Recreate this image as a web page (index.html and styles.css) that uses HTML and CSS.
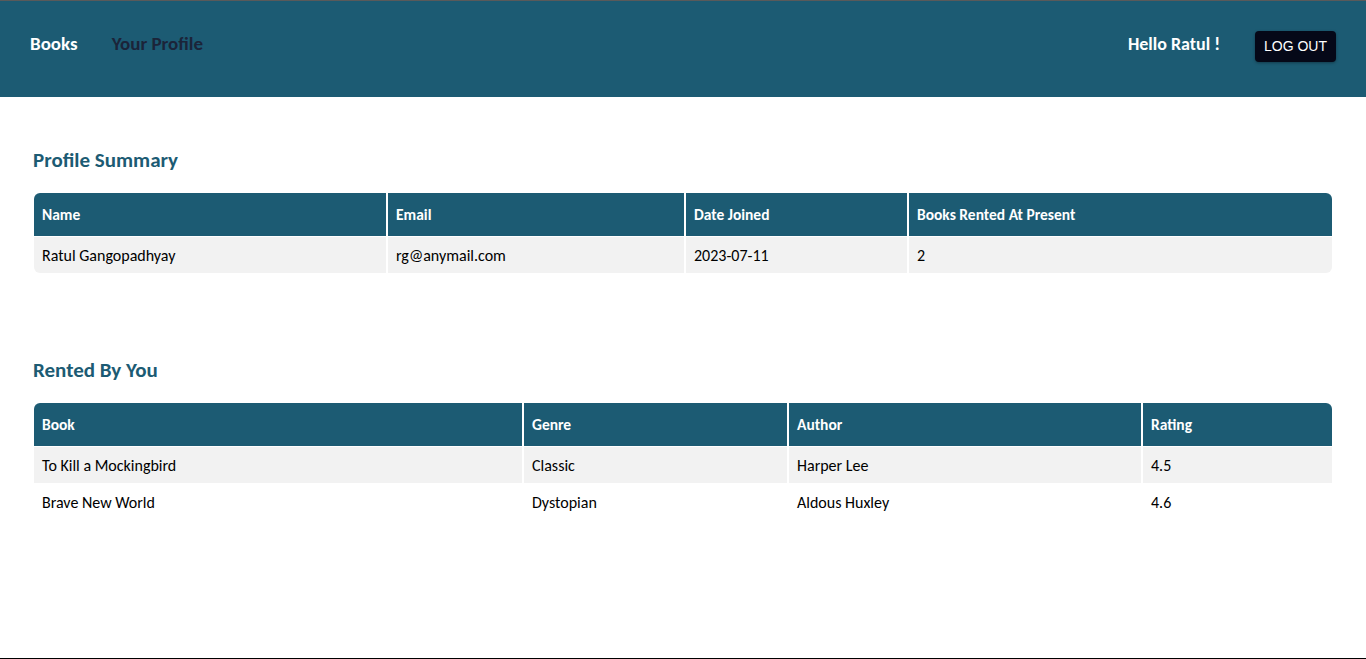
FILE: index.html
```html
<!DOCTYPE html>
<html lang="en">
<head>
<meta charset="utf-8">
<title>Your Profile</title>
<link rel="stylesheet" href="styles.css">
</head>
<body>
<div class="page">
  <header class="topbar">
    <nav class="nav">
      <a class="nav-link active" href="#">Books</a>
      <a class="nav-link" href="#">Your Profile</a>
    </nav>
    <div class="user">
      <span class="hello">Hello Ratul !</span>
      <button class="logout">LOG OUT</button>
    </div>
  </header>

  <main class="content">
    <section class="section">
      <h2 class="title">Profile Summary</h2>
      <table class="grid">
        <colgroup>
          <col class="c-name"><col class="c-email"><col class="c-date"><col>
        </colgroup>
        <thead>
          <tr><th>Name</th><th>Email</th><th>Date Joined</th><th>Books Rented At Present</th></tr>
        </thead>
        <tbody>
          <tr><td>Ratul Gangopadhyay</td><td>rg@anymail.com</td><td>2023-07-11</td><td>2</td></tr>
        </tbody>
      </table>
    </section>

    <section class="section second">
      <h2 class="title">Rented By You</h2>
      <table class="grid">
        <colgroup>
          <col class="c-book"><col class="c-genre"><col class="c-author"><col>
        </colgroup>
        <thead>
          <tr><th>Book</th><th>Genre</th><th>Author</th><th>Rating</th></tr>
        </thead>
        <tbody>
          <tr><td>To Kill a Mockingbird</td><td>Classic</td><td>Harper Lee</td><td>4.5</td></tr>
          <tr><td>Brave New World</td><td>Dystopian</td><td>Aldous Huxley</td><td>4.6</td></tr>
        </tbody>
      </table>
    </section>
  </main>
</div>
</body>
</html>
```

FILE: styles.css
```css
* { box-sizing: border-box; }
html, body { margin: 0; padding: 0; height: 100%; }
body {
  font-family: "Carlito", "Lato", "Open Sans", sans-serif;
  color: #000;
  background: #fff;
}
.page {
  height: 659px;
  border-top: 1px solid #5a5a5a;
  border-bottom: 1px solid #000;
  display: flex;
  flex-direction: column;
}
.topbar {
  background: #1c5b73;
  height: 96px;
  display: flex;
  align-items: center;
  justify-content: space-between;
  padding: 0 30px 0 30px;
}
.nav { display: flex; gap: 34px; align-items: center; margin-top: -12px; }
.nav-link {
  font-size: 19px;
  font-weight: 700;
  text-decoration: none;
  color: #1b2439;
}
.nav-link.active { color: #fff; }
.user { display: flex; align-items: center; gap: 35px; margin-top: -10px; }
.hello { color: #fff; font-weight: 700; font-size: 18px; }
.logout {
  background: #050818;
  color: #fff;
  border: none;
  border-radius: 4px;
  font-family: "Liberation Sans", Arial, sans-serif;
  font-size: 14px;
  padding: 0;
  height: 31px;
  width: 81px;
  margin-top: 4px;
  white-space: nowrap;
  box-shadow: 0 1px 3px rgba(0,0,0,0.35);
}
.content { padding: 0 33px; flex: 1; }
.section { padding-top: 50px; }
.section.second { padding-top: 83px; }
.title {
  margin: 0 0 18px 0;
  font-size: 21px;
  font-weight: 700;
  color: #1c5b73;
  line-height: 27px;
}
.grid {
  border-collapse: separate;
  border-spacing: 2px 1px;
  margin-left: -1px;
  width: calc(100% + 2px);
  table-layout: fixed;
  font-size: 16px;
}
.grid th {
  background: #1c5b73;
  color: #fff;
  text-align: left;
  font-weight: 700;
  font-size: 15.5px;
  height: 43px;
  padding: 0 8px;
}
.grid td {
  height: 36px;
  padding: 0 8px;
}
.grid tbody tr:nth-child(odd) td { background: #f2f2f2; }
.grid thead th:first-child { border-top-left-radius: 6px; }
.grid thead th:last-child { border-top-right-radius: 6px; }
.grid tbody tr:last-child td:first-child { border-bottom-left-radius: 6px; }
.grid tbody tr:last-child td:last-child { border-bottom-right-radius: 6px; }
.c-name { width: 352px; }
.c-email { width: 296px; }
.c-date { width: 221px; }
.c-book { width: 488px; }
.c-genre { width: 263px; }
.c-author { width: 352px; }
```
